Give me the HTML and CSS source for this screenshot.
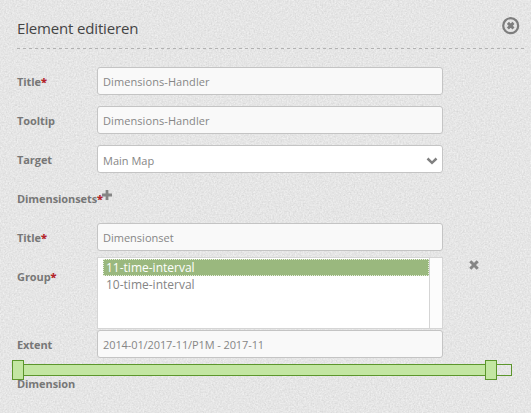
FILE: index.html
```
<!DOCTYPE html>
<html lang="de">
<head>
<meta charset="utf-8">
<title>Element editieren</title>
<link rel="stylesheet" href="styles.css">
</head>
<body>
<svg class="texture" aria-hidden="true">
  <filter id="linen" x="0" y="0" width="100%" height="100%" color-interpolation-filters="sRGB">
    <feTurbulence type="fractalNoise" baseFrequency="0.63" numOctaves="2" seed="4"/>
    <feColorMatrix values="0.11 0.07 0 0 0.809  0.11 0.07 0 0 0.809  0.11 0.07 0 0 0.809  0 0 0 0 1"/>
  </filter>
  <rect width="100%" height="100%" filter="url(#linen)"/>
</svg>
<main class="dialog">
  <header class="dialog-head">
    <h1>Element editieren</h1>
    <svg class="close" viewBox="0 0 18 18"><circle cx="8.700" cy="8.700" r="7.5" fill="none" stroke="currentColor" stroke-width="2.2"/><path d="M5.900 5.900l5.600 5.600M11.500 5.900l-5.600 5.600" stroke="currentColor" stroke-width="3"/></svg>
  </header>
  <form class="form">
    <div class="row"><label>Title<b>*</b></label><div class="field wider">Dimensions-Handler</div></div>
    <div class="row"><label>Tooltip</label><div class="field wider">Dimensions-Handler</div></div>
    <div class="row"><label>Target</label><div class="field select"><span>Main Map</span><svg class="chevron" viewBox="0 0 12 8"><path d="M1.5 1.5L6 5.8l4.500-4.300" fill="none" stroke="currentColor" stroke-width="2.500"/></svg></div></div>
    <div class="row"><label class="wide">Dimensionsets<b>*</b></label><svg class="plus" viewBox="0 0 10 10"><path d="M5 0v10M0 5h10" stroke="currentColor" stroke-width="2.800"/></svg></div>
    <div class="row"><label>Title<b>*</b></label><div class="field">Dimensionset</div></div>
    <div class="row group">
      <label>Group<b>*</b></label>
      <div class="list">
        <div class="options"><div class="option selected">11-time-interval</div><div class="option">10-time-interval</div></div>
        <div class="scroll"></div>
      </div>
      <svg class="remove" viewBox="0 0 10 10"><path d="M1.300 1.300l7.400 7.400M8.700 1.300L1.300 8.700" stroke="currentColor" stroke-width="3"/></svg>
    </div>
    <div class="row extent"><label>Extent</label><div class="field tighter">2014-01/2017-11/P1M - 2017-11</div></div>
    <div class="slider"><div class="range"></div><i class="handle from"></i><i class="handle to"></i></div>
    <div class="row last"><label>Dimension</label></div>
  </form>
</main>
</body>
</html>
```
FILE: styles.css
```
* { box-sizing: border-box; }
body {
  margin: 0;
  height: 413px;
  overflow: hidden;
  background: #e5e5e5;
  color: #777;
  font: 11px/15px "Open Sans", sans-serif;
}
svg { display: block; flex: none; }
.texture { position: absolute; inset: 0; z-index: -1; width: 100%; height: 100%; }
.dialog { padding: 0 6px 0 17px; }
.dialog-head {
  display: flex;
  justify-content: space-between;
  height: 49px;
  padding: 17px 5px 0 0;
  background: repeating-linear-gradient(90deg, #b2b2b2 0 3px, transparent 3px 6px) 0 100% / 100% 1px no-repeat;
}
h1 { margin: 0; color: #444; font-size: 15px; font-weight: 400; line-height: 23px; letter-spacing: -0.16px; }
.close { width: 18px; height: 18px; color: #7d7d7d; }
.form { padding-top: 18px; }
.row { display: flex; height: 28px; margin-bottom: 11px; }
label { width: 80px; flex: none; padding-top: 7px; font-weight: 700; color: #777; letter-spacing: -0.08px; }
label.wide { width: auto; }
label b { color: #b3242b; }
.field {
  width: 346px;
  height: 28px;
  padding: 6px 5px;
  border: 1px solid #c4c4c4;
  border-radius: 3px;
  background: #f9f9f9;
  color: #868686;
  white-space: nowrap;
}
.wider { letter-spacing: 0.08px; }
.tighter { letter-spacing: -0.1px; }
.select { display: flex; justify-content: space-between; padding-top: 7px; padding-right: 4px; background: #fff; }
.chevron { width: 12px; height: 8px; margin-top: 4px; color: #808080; }
.plus { width: 10px; height: 10px; margin: 6px 0 0 -1px; color: #858585; }
.group { height: 73px; margin: -5px 0 0; }
.group label { padding-top: 12px; }
.list { display: flex; width: 346px; height: 72px; border: 1px solid #d5d5d5; background: #fff; }
.options { flex: 1; padding: 1px 0 0 5px; font-size: 12px; line-height: 17px; }
.option { height: 17px; padding-left: 3px; color: #858585; }
.selected { background: #9ab87e; color: #fff; outline: 1px dotted #e8f0df; outline-offset: -1px; }
.scroll { width: 13px; border-left: 1px solid #d5d5d5; background: #fcfcfc; }
.remove { width: 10px; height: 10px; margin: 3px 0 0 26px; color: #858585; }
.extent { margin-bottom: 6px; }
.slider { position: relative; width: 500px; height: 12px; margin-left: -5px; border: 1px solid #5c962c; }
.range { width: 479px; height: 10px; background: #c3e6a2; }
.handle { position: absolute; top: -5px; width: 12px; height: 20px; border: 1px solid #5c962c; background: #c3e6a2; }
.from { left: -1px; }
.to { left: 472px; }
.last { position: relative; margin: -7px 0 0; }
```
